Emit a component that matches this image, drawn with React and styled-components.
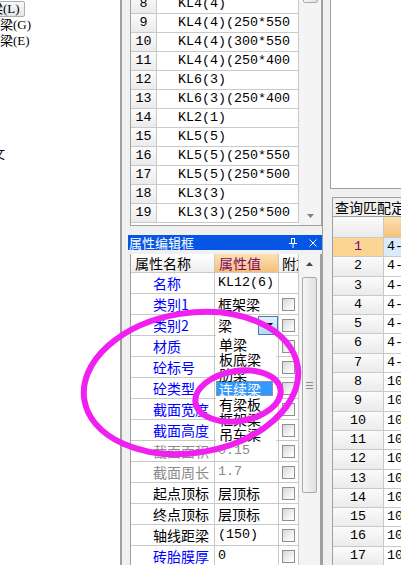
import React from "react";
import styled, { createGlobalStyle } from "styled-components";

const MONO = `"Liberation Mono", "Noto Sans CJK SC", monospace`;
const CJK = `"Noto Sans CJK SC", "Liberation Sans", sans-serif`;

const GlobalStyle = createGlobalStyle`
  html, body { margin: 0; padding: 0; }
  body { font-family: ${CJK}; background: #f0f0f0; }
`;

const Screen = styled.div`
  position: relative;
  display: flex;
  width: 401px;
  height: 565px;
  overflow: hidden;
  background: #f0f0f0;
`;

/* ---------- left tree ---------- */
const LeftPane = styled.div`
  flex: none;
  width: 120px;
  padding-top: 1px;
  background: #fff;
  border-right: 2px solid #a0a0a0;
  overflow: hidden;
  font-family: "Liberation Serif", "Noto Sans CJK SC", serif;
  font-size: 13px;
`;

const MenuItem = styled.div`
  display: flex;
  align-items: center;
  width: max-content;
  height: 16px;
  box-sizing: border-box;
  margin-left: ${(p) => p.$shift}px;
  margin-top: ${(p) => p.$gap || 0}px;
  padding-right: 4px;
  white-space: nowrap;
  line-height: 14px;
  ${(p) =>
    p.$active &&
    `
    border: 1px solid #adadad;
    border-radius: 2px;
    background: linear-gradient(#fafafa, #e4e4e4);
  `}
`;

/* ---------- middle column ---------- */
const Middle = styled.div`
  flex: none;
  width: 192px;
  padding-left: 8px;
  display: flex;
  flex-direction: column;
`;

const ListBox = styled.div`
  flex: none;
  display: flex;
  height: 232px;
  margin-top: -6px;
  box-sizing: border-box;
  border: 1px solid #a0a0a0;
  background: #fff;
`;

const ListRows = styled.div`
  flex: none;
  width: 168px;
`;

const ListRow = styled.div`
  display: flex;
  height: 19px;
  box-sizing: border-box;
  border-bottom: 1px solid #c9c9c9;
  font-family: ${MONO};
  font-size: 13.33px;
  line-height: 18px;
  color: #000;
`;

const NumCell = styled.div`
  flex: none;
  width: 26px;
  box-sizing: border-box;
  border-right: 1px solid #c9c9c9;
  background: linear-gradient(#fbfbfb, #ebebeb);
  text-align: center;
`;

const NameCell = styled.div`
  flex: none;
  width: 142px;
  box-sizing: border-box;
  border-right: 1px solid #c9c9c9;
  padding-left: 21px;
  white-space: nowrap;
  overflow: hidden;
`;

const VScroll = styled.div`
  flex: 1;
  display: flex;
  flex-direction: column;
  align-items: center;
  background: #f4f4f4;
`;

const Thumb = styled.div`
  flex: none;
  display: flex;
  align-items: center;
  justify-content: center;
  width: 15px;
  height: ${(p) => p.$h}px;
  margin-top: ${(p) => p.$top}px;
  box-sizing: border-box;
  border: 1px solid #a9a9a9;
  border-radius: 2px;
  background: linear-gradient(90deg, #f6f6f6, #e0e0e0);
`;

const Grip = styled.div`
  width: 7px;
  height: 7px;
  background: repeating-linear-gradient(#8c8c8c 0 1px, transparent 1px 3px);
`;

const ArrowBox = styled.div`
  flex: none;
  display: flex;
  align-items: center;
  justify-content: center;
  width: 100%;
  height: ${(p) => p.$h}px;
  margin-top: ${(p) => (p.$end ? "auto" : "0")};
  margin-bottom: ${(p) => (p.$end ? 1 : 0)}px;
`;

/* ---------- property panel ---------- */
const PropPanel = styled.div`
  flex: 1;
  min-height: 0;
  display: flex;
  flex-direction: column;
  margin-top: 9px;
  margin-left: -2px;
`;

const TitleBar = styled.div`
  flex: none;
  display: flex;
  align-items: center;
  height: 15px;
  padding: 0 5px 0 1px;
  background: #0656e6;
  color: #fff;
  font-family: ${CJK};
  font-size: 13px;
  line-height: 15px;
`;

const TitleTools = styled.div`
  margin-left: auto;
  display: flex;
  align-items: center;
  gap: 12px;
`;

const PropGrid = styled.div`
  flex: 1;
  min-height: 0;
  display: flex;
  margin: 4px 0 0 2px;
  border-left: 1px solid #a0a0a0;
  border-right: 2px solid #a0a0a0;
  background: #fff;
`;

const PropTable = styled.div`
  flex: none;
  width: 168px;
`;

const PropRow = styled.div`
  display: flex;
  height: ${(p) => (p.$head ? 19 : 21)}px;
  box-sizing: border-box;
  border-bottom: 1px solid #c9c9c9;
`;

const toneColor = { blue: "#0000ff", gray: "#8a8a8a", black: "#000" };

const LabelCell = styled.div`
  flex: none;
  width: 84px;
  box-sizing: border-box;
  border-right: 1px solid #c9c9c9;
  padding-left: ${(p) => (p.$head ? 4 : 22)}px;
  font-family: ${CJK};
  font-size: 14px;
  line-height: ${(p) => (p.$head ? 18 : 20)}px;
  color: ${(p) => toneColor[p.$tone] || "#000"};
  white-space: nowrap;
  overflow: hidden;
  background: ${(p) => (p.$head ? "linear-gradient(#ffffff, #eeeeee)" : "#fff")};
`;

const ValueCell = styled.div`
  position: relative;
  flex: none;
  display: flex;
  align-items: center;
  justify-content: space-between;
  width: 64px;
  box-sizing: border-box;
  border-right: 1px solid #c9c9c9;
  padding-left: ${(p) => (p.$head ? 4 : 3)}px;
  color: ${(p) => (p.$head ? "#7a0a6e" : toneColor[p.$tone] || "#000")};
  background: ${(p) => (p.$head ? "linear-gradient(#fbe2b2, #f4c179)" : "#fff")};
`;

const ValueText = styled.span`
  overflow: hidden;
  white-space: nowrap;
  font-family: ${(p) => (p.$cjk ? CJK : MONO)};
  font-size: ${(p) => (p.$cjk ? 14 : 13.33)}px;
  line-height: 18px;
`;

const FlagCell = styled.div`
  flex: none;
  display: flex;
  align-items: center;
  justify-content: ${(p) => (p.$head ? "flex-start" : "center")};
  width: 20px;
  box-sizing: border-box;
  border-right: 1px solid #c9c9c9;
  padding-left: ${(p) => (p.$head ? 3 : 0)}px;
  overflow: hidden;
  white-space: nowrap;
  font-family: ${CJK};
  font-size: 14px;
  line-height: 18px;
  background: ${(p) => (p.$head ? "linear-gradient(#ffffff, #eeeeee)" : "#fff")};
`;

const Check = styled.span`
  width: 13px;
  height: 13px;
  box-sizing: border-box;
  border: 1px solid #8f8f8f;
  background: linear-gradient(135deg, #d6d6d6, #f6f6f6 70%, #ffffff);
`;

const DropButton = styled.span`
  flex: none;
  display: flex;
  align-items: center;
  justify-content: center;
  width: 20px;
  height: 19px;
  box-sizing: border-box;
  border: 1px solid #3c7fb1;
  background: linear-gradient(#e3f0fd, #b9d6f5);
`;

const DropList = styled.div`
  position: absolute;
  top: 20px;
  left: 1px;
  z-index: 5;
  width: 60px;
  padding-top: 1px;
  background: #fff;
  font-family: ${CJK};
  font-size: 14px;
`;

const DropItem = styled.div`
  height: 15px;
  box-sizing: border-box;
  margin-right: 3px;
  padding-left: 2px;
  line-height: 14px;
  white-space: nowrap;
  color: ${(p) => (p.$sel ? "#fff" : "#000")};
  background: ${(p) => (p.$sel ? "#3399ff" : "transparent")};
  border: 1px ${(p) => (p.$sel ? "dotted #d39a55" : "solid transparent")};
`;

/* ---------- right column ---------- */
const RightCol = styled.div`
  flex: 1;
  min-width: 0;
  display: flex;
  flex-direction: column;
  border-left: 1px solid #a0a0a0;
  padding-left: 7px;
`;

const BlankPane = styled.div`
  flex: none;
  height: 189px;
  box-sizing: border-box;
  background: #fff;
  border-left: 1px solid #a0a0a0;
  border-bottom: 1px solid #a0a0a0;
`;

const QueryBox = styled.div`
  flex: 1;
  min-height: 0;
  display: flex;
  flex-direction: column;
  margin: 8px 0 0 2px;
  border-top: 1px solid #a0a0a0;
  border-left: 1px solid #a0a0a0;
`;

const TabHeader = styled.div`
  flex: none;
  height: 19px;
  box-sizing: border-box;
  padding-left: 2px;
  border-bottom: 1px solid #a0a0a0;
  font-family: ${CJK};
  font-size: 14px;
  line-height: 18px;
  white-space: nowrap;
  overflow: hidden;
`;

const QRow = styled.div`
  flex: none;
  display: flex;
  height: ${(p) => (p.$head ? "21px" : "19.3px")};
  box-sizing: border-box;
  border-bottom: 1px solid #c9c9c9;
  font-family: ${MONO};
  font-size: 13.33px;
  line-height: 18px;
`;

const QNum = styled.div`
  flex: none;
  width: 51px;
  box-sizing: border-box;
  border-right: 1px solid #c9c9c9;
  text-align: center;
  color: ${(p) => (p.$sel ? "#800080" : "#000")};
  background: ${(p) => (p.$sel ? "#fcd592" : "linear-gradient(#fbfbfb, #ebebeb)")};
`;

const QData = styled.div`
  flex: 1;
  padding-left: 3px;
  white-space: nowrap;
  overflow: hidden;
  background: ${(p) =>
    p.$head ? "linear-gradient(#fbe2b2, #f4c179)" : p.$sel ? "#dcebfc" : "#fff"};
`;

const Marks = styled.svg`
  position: absolute;
  left: 0;
  top: 0;
  width: 401px;
  height: 565px;
  pointer-events: none;
  z-index: 10;
`;

const listRows = [
  [8, "KL4(4)"],
  [9, "KL4(4)(250*550"],
  [10, "KL4(4)(300*550"],
  [11, "KL4(4)(250*400"],
  [12, "KL6(3)"],
  [13, "KL6(3)(250*400"],
  [14, "KL2(1)"],
  [15, "KL5(5)"],
  [16, "KL5(5)(250*550"],
  [17, "KL5(5)(250*500"],
  [18, "KL3(3)"],
  [19, "KL3(3)(250*500"],
];

const props = [
  { name: "名称", tone: "blue", value: "KL12(6)", noCheck: true },
  { name: "类别1", tone: "blue", value: "框架梁", cjk: true },
  { name: "类别2", tone: "blue", value: "梁", cjk: true, dropdown: true },
  { name: "材质", tone: "blue", value: "现浇", cjk: true },
  { name: "砼标号", tone: "blue", value: "C30" },
  { name: "砼类型", tone: "blue", value: "普通", cjk: true },
  { name: "截面宽度", tone: "blue", value: "250" },
  { name: "截面高度", tone: "blue", value: "600" },
  { name: "截面面积", tone: "gray", value: "0.15", valueTone: "gray" },
  { name: "截面周长", tone: "gray", value: "1.7", valueTone: "gray" },
  { name: "起点顶标", tone: "black", value: "层顶标", cjk: true },
  { name: "终点顶标", tone: "black", value: "层顶标", cjk: true },
  { name: "轴线距梁", tone: "black", value: "(150)" },
  { name: "砖胎膜厚", tone: "blue", value: "0" },
];

const choices = ["单梁", "板底梁", "肋梁", "连续梁", "有梁板", "框架梁", "吊车梁"];

// small solid triangle used by scroll arrows and the combo button
const Arrow = ({ up, color = "#6e6e6e", w = 7, h = 4 }) => (
  <svg width={w} height={h} viewBox={`0 0 ${w} ${h}`}>
    <polygon
      points={up ? `0,${h} ${w},${h} ${w / 2},0` : `0,0 ${w},0 ${w / 2},${h}`}
      fill={color}
    />
  </svg>
);

const PinIcon = () => (
  <svg width="8" height="10" viewBox="0 0 8 10">
    <path d="M2 0.5h4M2.5 0.5v5M5.5 0.5v5M0 5.5h8M4 5.5V10" stroke="#fff" strokeWidth="1" fill="none" />
  </svg>
);

const CloseIcon = () => (
  <svg width="8" height="8" viewBox="0 0 8 8">
    <path d="M0.5 0.5l7 7M7.5 0.5l-7 7" stroke="#fff" strokeWidth="1" fill="none" />
  </svg>
);

export default function App() {
  return (
    <>
      <GlobalStyle />
      <Screen>
        <LeftPane>
          <MenuItem $shift={-11} $active>梁(L)</MenuItem>
          <MenuItem $shift={-13}>连梁(G)</MenuItem>
          <MenuItem $shift={-13}>圈梁(E)</MenuItem>
          <MenuItem $shift={-8} $gap={97}>文</MenuItem>
        </LeftPane>

        <Middle>
          <ListBox>
            <ListRows>
              {listRows.map(([n, t]) => (
                <ListRow key={n}>
                  <NumCell>{n}</NumCell>
                  <NameCell>{t}</NameCell>
                </ListRow>
              ))}
            </ListRows>
            <VScroll>
              <Thumb $h={8} $top={0} />
              <ArrowBox $h={17} $end>
                <Arrow color="#808080" />
              </ArrowBox>
            </VScroll>
          </ListBox>

          <PropPanel>
            <TitleBar>
              属性编辑框
              <TitleTools>
                <PinIcon />
                <CloseIcon />
              </TitleTools>
            </TitleBar>
            <PropGrid>
              <PropTable>
                <PropRow $head>
                  <LabelCell $head>属性名称</LabelCell>
                  <ValueCell $head>
                    <ValueText $cjk>属性值</ValueText>
                  </ValueCell>
                  <FlagCell $head>附加</FlagCell>
                </PropRow>
                {props.map((p) => (
                  <PropRow key={p.name}>
                    <LabelCell $tone={p.tone}>{p.name}</LabelCell>
                    <ValueCell $tone={p.valueTone}>
                      <ValueText $cjk={p.cjk}>{p.value}</ValueText>
                      {p.dropdown && (
                        <>
                          <DropButton>
                            <Arrow color="#000" w={9} h={5} />
                          </DropButton>
                          <DropList>
                            {choices.map((c) => (
                              <DropItem key={c} $sel={c === "连续梁"}>
                                {c}
                              </DropItem>
                            ))}
                          </DropList>
                        </>
                      )}
                    </ValueCell>
                    <FlagCell>{!p.noCheck && <Check />}</FlagCell>
                  </PropRow>
                ))}
              </PropTable>
              <VScroll>
                <ArrowBox $h={19}>
                  <Arrow up color="#444" />
                </ArrowBox>
                <Thumb $h={216} $top={4}>
                  <Grip />
                </Thumb>
              </VScroll>
            </PropGrid>
          </PropPanel>
        </Middle>

        <RightCol>
          <BlankPane />
          <QueryBox>
            <TabHeader>查询匹配定义</TabHeader>
            <QRow $head>
              <QNum />
              <QData $head />
            </QRow>
            {Array.from({ length: 17 }, (_, i) => i + 1).map((n) => (
              <QRow key={n}>
                <QNum $sel={n === 1}>{n}</QNum>
                <QData $sel={n === 1}>{n <= 7 ? "4-1-1" : "10-1"}</QData>
              </QRow>
            ))}
          </QueryBox>
        </RightCol>

        <Marks viewBox="0 0 401 565">
          <ellipse
            cx="191"
            cy="383"
            rx="108"
            ry="70"
            transform="rotate(-9 191 383)"
            fill="none"
            stroke="#f020f0"
            strokeWidth="6"
          />
          <ellipse
            cx="238"
            cy="396"
            rx="43"
            ry="25"
            transform="rotate(-9 238 396)"
            fill="none"
            stroke="#f020f0"
            strokeWidth="6"
          />
        </Marks>
      </Screen>
    </>
  );
}
